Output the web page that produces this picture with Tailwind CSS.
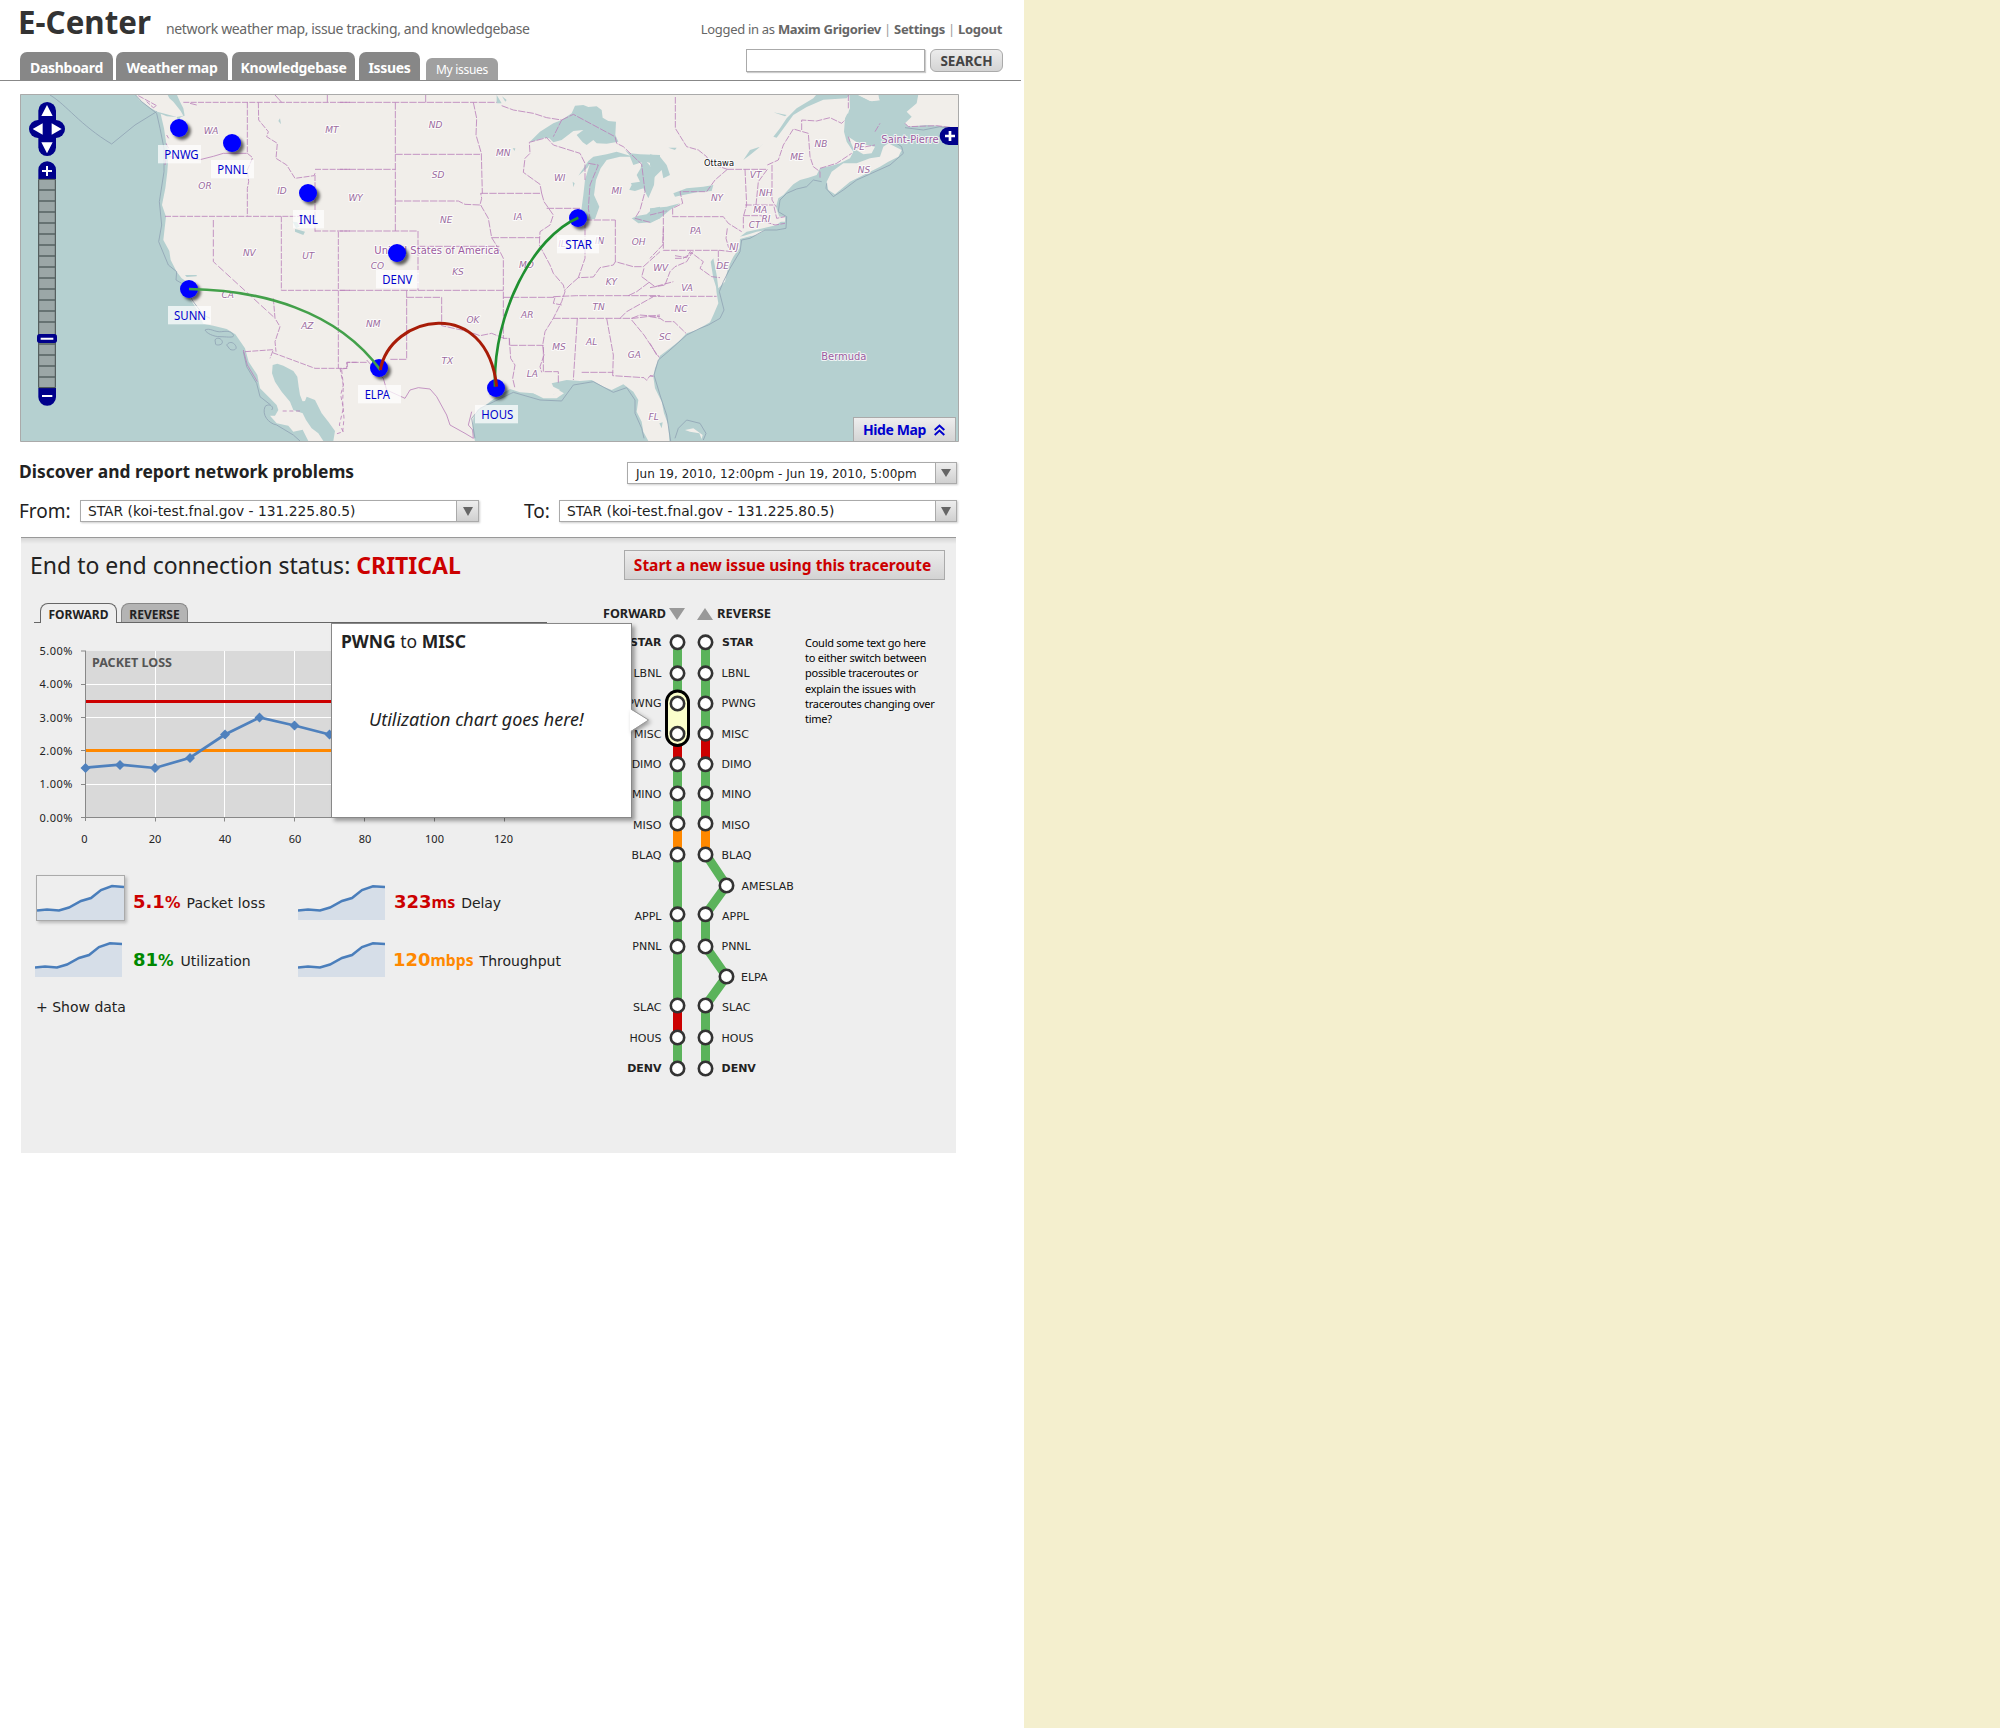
<!DOCTYPE html>
<html lang="en">
<head>
<meta charset="utf-8">
<title>E-Center</title>
<script src="https://cdn.jsdelivr.net/npm/@tailwindcss/browser@4"></script>
</head>
<body class="flex bg-[#f4efce] font-['Noto_Sans',sans-serif] text-[#222]">
<main class="h-[1728px] w-[1024px] shrink-0 bg-white">

  <header class="h-[81px] w-[1021px] border-b border-[#888]">
    <div class="flex h-[52px] items-baseline whitespace-nowrap pt-[2px] pl-[18px] pr-[19px] text-[#666]">
      <h1 class="w-[148px] text-[31.300px] leading-10 font-bold text-[#333]">E-Center</h1>
      <p class="text-[14px] tracking-[-0.35px]">network weather map, issue tracking, and knowledgebase</p>
      <p class="ml-auto text-[13px] tracking-[-0.3px]">Logged in as <b>Maxim Grigoriev</b> <span class="text-[#999]">|</span> <b>Settings</b> <span class="text-[#999]">|</span> <b>Logout</b></p>
    </div>
    <nav class="flex h-7 items-end pl-5 whitespace-nowrap text-[14px] font-bold tracking-[-0.3px] text-white">
      <a class="h-7 w-[93px] rounded-t-[7px] bg-[#878787] text-center leading-[31px]">Dashboard</a>
      <a class="ml-[3px] h-7 w-[112px] rounded-t-[7px] bg-[#878787] text-center leading-[31px]">Weather map</a>
      <a class="ml-1 h-7 w-[123px] rounded-t-[7px] bg-[#878787] text-center leading-[31px]">Knowledgebase</a>
      <a class="ml-1 h-7 w-[61px] rounded-t-[7px] bg-[#878787] text-center leading-[31px]">Issues</a>
      <a class="ml-1.5 h-[22px] w-[72px] rounded-t-[6px] bg-[#a0a0a0] text-center text-[12px] leading-[23px] font-normal">My issues</a>
      <form class="-mt-[3px] mr-[18px] ml-auto flex gap-[5px] self-start">
        <input class="h-[23px] w-[179px] border border-[#aaa] bg-white shadow-[1px_1px_1px_#ccc]">
        <button type="button" class="h-[23px] w-[73px] rounded-[6px] border border-[#aaa] bg-linear-to-b from-[#ececec] to-[#d4d4d4] text-[13.500px] leading-[22px] tracking-normal text-[#444]">SEARCH</button>
      </form>
    </nav>
  </header>

  <section class="relative mt-[13px] ml-5 h-[348px] w-[939px] overflow-hidden">
    <svg class="block h-[348px] w-[939px]" viewBox="60 282 2817 1044" fill="none" stroke-linejoin="round">
      <defs>
        <filter id="drop" x="-50%" y="-50%" width="220%" height="220%"><feDropShadow dx="9" dy="9" stdDeviation="5" flood-color="#000" flood-opacity=".6"/></filter>
      </defs>
      <rect x="60" y="282" width="2817" height="1044" fill="#f1eeea"/>

      <!-- West -->
      <g transform="translate(30 255)">
        <g fill="#b5d0d0">
          <path d="M30 28H375L388 45 420 68 442 80 470 88 500 96 520 92 512 78 490 50 478 40 472 28H500L510 50 520 70 524 92 512 96 506 112 500 96 470 94 452 86 455 100 462 130 468 170 476 205 472 260 466 310 456 360 468 395 464 430 460 465 478 498 482 525 500 560 515 580 530 590 540 640 560 672 580 716 610 722 650 732 676 748 705 790 716 830 742 870 750 910 780 940 800 960 805 975 795 992 780 992 800 1015 835 1022 850 1040 878 1034 895 1068H30Z"/>
          <path d="M788 840 802 836 820 842 850 858 862 875 866 905 870 930 878 950 868 950 885 948 890 935 915 945 935 985 955 1010 975 1038 970 1068H940L925 1045 905 1030 888 1005 878 985 850 975 840 950 815 920 795 890 786 865Z"/>
          <path d="M855 432 870 436 885 440 880 450 870 446 855 440ZM525 570 560 570 560 574 530 576ZM805 108 810 100 813 118ZM848 410 862 412 868 425 858 430Z"/>
        </g>
        <g stroke="#90a4b4" stroke-width="2.5">
          <path d="M120 30C170 60 210 120 305 177L375 120 440 80M375 28 395 50 440 85 450 130 462 190 462 260 448 350 455 420 446 470 475 540 500 560 498 585 515 595 550 650 580 690 600 700"/>
          <path d="M585 735c15-8 30 8 50 5s30 0 35 10-20 5-40 5-40-10-45-20M615 765c5-10 20-5 22 5s-15 12-20 8zM650 780c10-15 25-5 28 5s-10 12-18 8zM700 800l10 45 30 50 10 40 32 25M765 965c10-12 30 0 20 10M765 965c-10 25 10 50 35 55l50 30 20 18"/>
        </g>
        <g stroke="#bb82bb" stroke-width="2.5">
          <path d="M385 32 440 62 430 68 410 50M520 52H1020M712 52V205M712 205 728 218 712 255 716 290 712 310V394M745 52 746 105 775 140 770 155 802 175 798 220 830 240 855 280 912 272 915 265V440M915 253H1020M915 438H1020M985 440V850M814 394V616H1020M790 640 795 700 810 725 795 770 798 800M705 800 790 794 780 820M788 803 915 850H1010V832H1040M465 394H915" stroke-dasharray="18 4"/>
          <path d="M610 405V530L790 695" stroke-dasharray="22 7"/>
          <path d="M476 215 570 224 610 214 640 205H710M795 30 815 52M952 30V52M560 60l-20-5M470 150l6 10M468 175l8 15M465 240l5-30M700 795l12 45 30 50"/>
          <path d="M995 855 1000 900 992 930 1000 970 988 1020 1000 1040 975 1048M870 978H810" stroke-dasharray="12 8"/>
        </g>
      </g>

      <!-- Central -->
      <g transform="translate(1020 255)">
        <g fill="#b5d0d0">
          <path d="M568 172 600 140 640 115 665 105 695 85 705 62 730 60 745 66 770 64 785 75 788 98 805 108 828 110 826 150 835 170 800 176 770 175 760 165 740 180 728 172 710 150 730 135 700 138 665 165 640 172 628 160 612 158 590 166Z"/>
          <path d="M735 285 730 330 724 375 740 405 765 402 778 365 762 330 768 285 782 250 800 225 840 215 870 215 880 240 905 232 902 250 890 270 900 290 870 295 855 312 885 318 910 310 925 340 942 300 945 260 920 230 960 245V210L900 208 870 205 855 195 870 212 830 200 800 208 760 215 745 228 715 272 742 248 750 235Z"/>
          <path d="M875 400 895 392 920 388 940 370 960 365V400L930 412 895 415ZM470 30 485 55 470 55ZM486 34 500 45 496 50ZM518 190l8 0-2 8zM698 290l6 5-4 12z"/>
          <path d="M405 1068 398 1040 400 1000 412 975 440 958 470 935 510 912 540 922 580 925 615 935 640 930 660 915 640 905 635 895 680 885 720 888 755 885 790 905 815 915 850 898 880 920 895 945 890 980 905 1010 910 1040 925 1068Z"/>
        </g>
        <g fill="#f1eeea"><path d="M580 925 600 918 640 930 655 915 672 925 650 940 610 940Z"/><path d="M780 290 790 255 815 240 845 225 860 260 875 300 860 330 780 330Z"/></g>
        <g stroke="#90a4b4" stroke-width="2.5"><path d="M405 1060 395 1000 420 970 520 922 600 945 665 948 700 900 760 890 820 922 860 908 885 945 885 985 905 1030 912 1060"/></g>
        <g stroke="#bb82bb" stroke-width="2.5">
          <path d="M0 52H470M257 30V52M166 52V438M166 208H420M0 253H166M400 52 410 100 408 150 424 205 427 325M422 325H605M166 348H355L375 358 420 360 425 340 422 325M422 360 445 400 455 458 475 490 490 520 490 616M455 458H600M605 325 612 350 640 390 630 420 600 440 598 480 630 540 640 565 670 600 675 620 665 650 655 670 640 700 615 740 608 780M605 325 600 298 550 262 555 220 570 205 568 172 620 158 640 180 720 205 735 235 735 285M620 370H722M735 405H826M0 438H234V616M234 484H478M0 616H490V760H508V781H610V860H655V895M200 616V823H148M200 637H305V722L350 732 380 738 420 752 455 745 492 760M490 637H645L640 655 665 660M508 760 512 820 525 840 518 880 525 910M608 781 612 810 600 845 605 862M640 700H880L960 690M712 700 700 885M800 700 820 810 818 872 912 878 920 886 930 872 960 878M725 862H820M735 408V520L715 578 760 576 780 548 820 540 826 530 880 545 910 545M826 405V530M640 635 710 632 960 632M865 632 890 620 930 590M840 700 860 680 940 635M910 545 960 500M912 550 905 575 945 605 1000 590M715 578 690 600 675 615M485 62 520 75 580 85 620 98 665 105 640 155M665 105 700 88 825 155 830 175 850 185 905 238 915 320 900 375 885 400 930 412 960 390M745 235 775 240 750 300 745 370 750 400M0 852 22 850V832H80M875 700 900 690 960 695M875 705 912 750 945 800 960 820" stroke-dasharray="22 4"/>
          <path d="M80 825 130 880 140 915 195 940 210 915 235 908 270 912 290 935 320 990 330 1020 375 1045 400 1060 398 1035 385 1020 395 980"/>
          <path d="M0 850 10 900 8 950 12 1000 8 1040" stroke-dasharray="12 8"/>
        </g>
      </g>

      <!-- East -->
      <g transform="translate(1950 255)">
        <g fill="#b5d0d0">
          <path d="M927 28H685L688 45 660 48 620 28H598L600 70 585 100 582 140 590 170 600 185 610 200 600 220 570 235 545 242 510 250 500 270 475 278 450 285 430 298 400 330 385 340 378 365 388 395 405 400 380 420 330 432 290 440 270 455 320 448 270 462 268 490 250 515 235 545 225 590 205 610 200 570 190 520 182 530 190 580 198 605 200 625 205 655 190 690 180 712 140 735 110 745 85 770 60 790 30 812 15 850 10 875 15 910 35 950 42 985 55 1020 58 1068H927Z"/>
          <path d="M370 155 390 130 410 100 440 70 490 40 500 28H600L590 40 520 44 470 66 430 90 390 145 380 158ZM0 208 30 215 50 240 60 270 40 280 35 255 10 280 0 240ZM55 188H80L75 195ZM70 325 110 310 160 305 190 300 185 318 140 322 100 330 75 335ZM0 370 50 365 90 355 60 375 30 400 0 415ZM370 82 410 90 405 94ZM280 225 300 195 330 185 350 165 325 190 300 210ZM28 1015 38 1012 35 1030Z"/>
        </g>
        <g fill="#f1eeea">
          <path d="M927 28H805L800 55 770 80 785 95 765 115 775 125 830 120 927 128Z"/>
          <path d="M530 290 545 260 580 235 620 235 660 220 690 215 700 185 715 175 755 195 745 215 715 230 690 245 600 290 555 328 535 315ZM595 155 625 175 650 180 675 185 665 205 640 208 610 190ZM505 62 530 50 570 42 598 55 595 85 560 95 530 92ZM385 395h20v15h-20zM620 28h55l15 18-25 3z"/>
          <path d="M258 460 320 440 345 436 320 450ZM105 1035 130 1030 158 1050 155 1062 148 1045 120 1040Z"/>
        </g>
        <g stroke="#90a4b4" stroke-width="2.5"><path d="M530 295 528 310 550 335 580 315 620 285 720 240 760 205 755 185 740 175M515 290 490 285 470 305 440 312 410 325 390 345 385 380 410 395 408 430 380 435 345 435 300 460 275 465 270 500 240 550 220 590 208 620 222 675 210 700 175 720 150 730 110 750 60 795 25 825 12 870 30 930 50 990 62 1068M765 128 820 135 870 125 920 135M75 1060 85 1030 110 1005 150 1015 168 1045 160 1065"/></g>
        <g stroke="#bb82bb" stroke-width="2.5">
          <path d="M76 36V130L110 185 145 195 170 215 180 235 232 253M232 253 195 285 170 320H90L98 355 68 370V395H220L235 415 275 440M232 253H352M285 253 290 360 280 395V430M352 253 325 290 318 360M366 240V345L378 365M285 360H370M280 392H335L345 410M40 375V496H210M205 496 205 550H225M232 430 228 460 235 485 245 500 210 496M352 240 385 225 400 180 430 132 475 145 480 215 490 245 510 260 510 280M455 135V105L500 108 540 98 575 115 585 105M0 634H200M40 430 38 480 0 520M75 512 110 518 120 500 160 530 150 550 185 575 210 578M75 520 100 520 130 500M0 608 45 600 60 560 75 545 110 530 125 505M0 695 30 700 45 710 72 710 108 745M0 775 20 810M0 873H10M0 390 50 378M595 28V70M510 250 560 235 605 205M600 170 595 155M620 190 675 180M675 140 690 115M372 365 380 400 405 395M345 410 375 420 405 415M765 115 775 125 860 122 925 130" stroke-dasharray="20 4"/>
        </g>
      </g>

      <!-- Place names -->
      <g fill="#9c6ba0" stroke="#fff" stroke-width="6" stroke-opacity=".8" paint-order="stroke" text-anchor="middle" class="font-['DejaVu_Sans',sans-serif] text-[27px] italic">
        <text x="633" y="402">WA</text><text x="615" y="567">OR</text><text x="846" y="581">ID</text><text x="996" y="399">MT</text>
        <text x="748" y="769">NV</text><text x="925" y="776">UT</text><text x="683" y="894">CA</text><text x="922" y="988">AZ</text>
        <text x="1307" y="385">ND</text><text x="1314" y="535">SD</text><text x="1067" y="602">WY</text><text x="1339" y="669">NE</text>
        <text x="1132" y="806">CO</text><text x="1374" y="826">KS</text><text x="1120" y="980">NM</text><text x="1419" y="968">OK</text>
        <text x="1342" y="1092">TX</text><text x="1510" y="467">MN</text><text x="1679" y="543">WI</text><text x="1554" y="661">IA</text>
        <text x="1579" y="805">MO</text><text x="1582" y="953">AR</text><text x="1597" y="1130">LA</text><text x="1677" y="1049">MS</text>
        <text x="1775" y="1034">AL</text><text x="1903" y="1075">GA</text><text x="1796" y="929">TN</text><text x="1834" y="854">KY</text>
        <text x="1850" y="581">MI</text><text x="1916" y="736">OH</text><text x="1799" y="732">IN</text><text x="1686" y="742">IL</text>
        <text x="1982" y="814">WV</text><text x="1961" y="1260">FL</text><text x="2087" y="703">PA</text><text x="2151" y="602">NY</text>
        <text x="2267" y="534">VT</text><text x="2297" y="588">NH</text><text x="2281" y="639">MA</text><text x="2264" y="683">CT</text><text x="2298" y="666">RI</text>
        <text x="2202" y="750">NJ</text><text x="2168" y="806">DE</text><text x="2061" y="872">VA</text><text x="2043" y="937">NC</text><text x="1995" y="1019">SC</text>
        <text x="2391" y="481">ME</text><text x="2463" y="442">NB</text><text x="2578" y="450">PE</text><text x="2592" y="518">NS</text>
      </g>
      <g fill="#9c5ba0" stroke="#fff" stroke-width="6" stroke-opacity=".8" paint-order="stroke" class="font-['DejaVu_Sans',sans-serif] text-[30px]">
        <text x="1123" y="762" textLength="375">United States of America</text>
        <text x="2464" y="1080" textLength="135">Bermuda</text>
        <text x="2644" y="429" textLength="172">Saint-Pierre</text>
        <text x="2112" y="498" textLength="90" fill="#111" class="text-[25px]">Ottawa</text>
      </g>

      <!-- Sites and links -->
      <g fill="#00f" filter="url(#drop)">
        <circle cx="537" cy="384" r="27"/><circle cx="696" cy="429" r="27"/><circle cx="924" cy="579" r="27"/><circle cx="567" cy="867" r="27"/>
        <circle cx="1191" cy="759" r="27"/><circle cx="1137" cy="1104" r="27"/><circle cx="1488" cy="1164" r="27"/><circle cx="1734" cy="654" r="27"/>
      </g>
      <g stroke="#1f9030" stroke-width="8">
        <path d="M567 867C780 870 1010 930 1141 1110" stroke="#43a04a"/>
        <path d="M1485 1160C1478 940 1600 710 1735 653"/>
        <path d="M1141 1110C1170 945 1460 884 1490 1160" stroke="#a81c08" stroke-width="9"/>
      </g>
      <g fill="#fff" fill-opacity=".72">
        <rect x="474" y="435" width="129" height="55"/><rect x="633" y="480" width="129" height="55"/><rect x="879" y="630" width="93" height="55"/><rect x="504" y="918" width="129" height="55"/>
        <rect x="1128" y="810" width="129" height="55"/><rect x="1074" y="1155" width="129" height="55"/><rect x="1425" y="1215" width="129" height="55"/><rect x="1671" y="705" width="126" height="55"/>
      </g>
      <g fill="#0000cd" class="font-['Noto_Sans',sans-serif] text-[38px]">
        <text x="493" y="477" textLength="103" lengthAdjust="spacingAndGlyphs">PNWG</text><text x="652" y="522" textLength="90" lengthAdjust="spacingAndGlyphs">PNNL</text>
        <text x="897" y="672" textLength="56" lengthAdjust="spacingAndGlyphs">INL</text><text x="522" y="960" textLength="96" lengthAdjust="spacingAndGlyphs">SUNN</text>
        <text x="1147" y="852" textLength="90" lengthAdjust="spacingAndGlyphs">DENV</text><text x="1094" y="1197" textLength="76" lengthAdjust="spacingAndGlyphs">ELPA</text>
        <text x="1444" y="1257" textLength="96" lengthAdjust="spacingAndGlyphs">HOUS</text><text x="1696" y="747" textLength="80" lengthAdjust="spacingAndGlyphs">STAR</text>
      </g>

      <!-- Pan and zoom -->
      <g transform="translate(30 255)">
        <g fill="#00008b">
          <rect x="85" y="51" width="53" height="162" rx="26.500"/><rect x="57" y="105" width="108" height="54" rx="27"/>
          <path d="M85 282V255a26.500 26.500 0 0 1 53 0V282ZM85 909V936a26.500 26.500 0 0 0 53 0V909Z"/>
        </g>
        <path fill="#fff" d="M111 60 128 93H94ZM111 205 94 172H128ZM68 132 98 115V149ZM155 132 125 115V149Z"/>
        <rect x="86" y="283" width="50" height="625" fill="#9ba7a7" stroke="#444b4b" stroke-width="3"/>
        <path stroke="#566363" stroke-width="5" d="M87 315H135M87 348H135M87 381H135M87 414H135M87 447H135M87 480H135M87 513H135M87 546H135M87 579H135M87 612H135M87 645H135M87 678H135M87 711H135M87 777H135M87 810H135M87 843H135M87 876H135"/>
        <rect x="81" y="747" width="60" height="27" rx="8" fill="#00008b"/>
        <path stroke="#fff" stroke-width="6" d="M92 761H130M96 258H126M111 243V273M96 933H127"/>
      </g>
      <path fill="#00008b" d="M2877 381H2846a27 27 0 0 0 0 54H2877Z"/>
      <path stroke="#fff" stroke-width="8" d="M2835 408H2865M2850 393V423"/>
      <rect x="61.500" y="283.500" width="2814" height="1041" stroke="#aaa" stroke-width="3"/>
    </svg>
    <a class="absolute right-[3px] bottom-0 flex h-[25px] w-[103px] items-center border border-[#aaa] bg-linear-to-b from-[#eee] to-[#d4d4d4] pl-[9px] text-[14px] font-bold tracking-[-0.4px] whitespace-nowrap text-[#0000cd]">Hide Map
      <svg class="ml-[8px] h-3 w-[11px]" viewBox="0 0 11 12" fill="none" stroke="#0000cd" stroke-width="2"><path d="M.7 6 5.500 1.500 10.300 6M.7 11 5.500 6.500 10.300 11"/></svg>
    </a>
  </section>

  <div class="mt-5 ml-5 flex h-[22px] w-[937px] justify-between whitespace-nowrap">
    <h2 class="-ml-px text-[17.400px] leading-[18px] font-bold">Discover and report network problems</h2>
    <div class="flex h-[22px] w-[330px] border border-[#aaa] pl-2 shadow-[1px_1px_2px_#ccc]">
      <span class="grow font-['DejaVu_Sans',sans-serif] text-[12px] leading-[22px] tracking-[0.03px]">Jun 19, 2010, 12:00pm - Jun 19, 2010, 5:00pm</span>
      <span class="flex w-[21px] items-center justify-center border-l border-[#aaa] bg-linear-to-b from-[#eee] to-[#d0d0d0]"><svg class="h-2 w-2.5" viewBox="0 0 10 8"><path fill="#666" d="M0 0H10L5 8Z"/></svg></span>
    </div>
  </div>
  <div class="mt-4 ml-[19px] flex h-[22px] w-[938px] whitespace-nowrap">
    <label class="w-[61px] text-[19px] leading-[22px]">From:</label>
    <div class="flex h-[22px] w-[399px] border border-[#aaa] pl-[7px] shadow-[1px_1px_2px_#ccc]">
      <span class="grow font-['DejaVu_Sans',sans-serif] text-[13.800px] leading-[21px]">STAR (koi-test.fnal.gov - 131.225.80.5)</span>
      <span class="flex w-[22px] items-center justify-center border-l border-[#aaa] bg-linear-to-b from-[#eee] to-[#d0d0d0]"><svg class="h-[9px] w-2.5" viewBox="0 0 10 9"><path fill="#666" d="M0 0H10L5 9Z"/></svg></span>
    </div>
    <label class="ml-[45px] w-[35px] text-[19px] leading-[22px]">To:</label>
    <div class="flex h-[22px] w-[398px] border border-[#aaa] pl-[7px] shadow-[1px_1px_2px_#ccc]">
      <span class="grow font-['DejaVu_Sans',sans-serif] text-[13.800px] leading-[21px]">STAR (koi-test.fnal.gov - 131.225.80.5)</span>
      <span class="flex w-[21px] items-center justify-center border-l border-[#aaa] bg-linear-to-b from-[#eee] to-[#d0d0d0]"><svg class="h-[9px] w-2.5" viewBox="0 0 10 9"><path fill="#666" d="M0 0H10L5 9Z"/></svg></span>
    </div>
  </div>

  <section class="mt-[15px] ml-[21px] h-[616px] w-[935px] border-t border-[#999] bg-[linear-gradient(#d6d6d6,#eeeeee_6px)]">
    <div class="flex justify-between pt-3 pr-[11px] pl-[9px] whitespace-nowrap">
      <h2 class="text-[23px] leading-[30px]">End to end connection status: <b class="text-[#c00]">CRITICAL</b></h2>
      <button type="button" class="h-[30px] w-[321px] border border-[#aaa] bg-linear-to-b from-[#ececec] to-[#d3d3d3] pr-1 text-[15.500px] leading-[28px] font-bold text-[#c00]">Start a new issue using this traceroute</button>
    </div>

    <div class="mt-[23px] flex">
      <div class="relative w-[552px] pl-[13px]">
        <div class="flex h-5 w-[513px] items-start border-b border-[#666] pl-1.5 whitespace-nowrap text-[12px] font-bold">
          <a class="h-5 w-[77px] rounded-t-[8px] border border-b-0 border-[#666] bg-[#eee] text-center leading-[22px]">FORWARD</a>
          <a class="ml-1 h-[19px] w-[67px] rounded-t-[8px] border border-b-0 border-[#888] bg-[#b4b4b4] text-center leading-[22px]">REVERSE</a>
        </div>

        <svg class="block h-[240px] w-[513px]" viewBox="34 623 513 240" fill="none">
          <path fill="#d9d9d9" d="M86 651H547V817.500H86Z"/>
          <path stroke="#fff" d="M86 684.500H547M86 717.500H547M86 751H547M86 784.500H547M155.500 651V817M224.500 651V817M294.500 651V817M364.500 651V817"/>
          <path stroke="#888" d="M85.500 651V821M81 651H86M81 684.500H86M81 717.500H86M81 750.500H86M81 784.500H86M81 817.500H547M155.500 817V821.500M224.500 817V821.500M294.500 817V821.500M364.500 817V821.500M434.500 817V821.500M504.500 817V821.500"/>
          <path stroke="#c00" stroke-width="3" d="M86 701.500H547"/>
          <path stroke="#f80" stroke-width="3" d="M86 750.500H547"/>
          <path stroke="#4f81bd" stroke-width="2.700" d="M85.500 767.700 120 764.700 155 768 190 757.700 225 734.500 259.500 717.500 294.500 725.500 329.500 734.500 364 740"/>
          <path fill="#4f81bd" d="M85.500 763l5 5-5 5-5-5zM120 760l5 5-5 5-5-5zM155 763l5 5-5 5-5-5zM190 753l5 5-5 5-5-5zM225 729.500l5 5-5 5-5-5zM259.500 712.500l5 5-5 5-5-5zM294.500 720.500l5 5-5 5-5-5zM329.500 729.500l5 5-5 5-5-5z"/>
          <text x="92" y="667" textLength="80" fill="#555" class="text-[12px] font-bold" lengthAdjust="spacingAndGlyphs">PACKET LOSS</text>
          <g fill="#222" class="text-[11px]">
            <text x="39.500" y="655" textLength="33">5.00%</text><text x="39.500" y="688" textLength="33">4.00%</text><text x="39.500" y="721.500" textLength="33">3.00%</text>
            <text x="39.500" y="754.500" textLength="33">2.00%</text><text x="39.500" y="788" textLength="33">1.00%</text><text x="39.500" y="821.500" textLength="33">0.00%</text>
            <g text-anchor="middle"><text x="84.500" y="843">0</text><text x="155" y="843">20</text><text x="225" y="843">40</text><text x="295" y="843">60</text><text x="365" y="843">80</text><text x="434.500" y="843">100</text><text x="503.500" y="843">120</text></g>
          </g>
        </svg>

        <div class="mt-3 grid grid-cols-[263px_1fr] whitespace-nowrap font-['DejaVu_Sans',sans-serif] text-[14px]">
          <div class="flex h-[67px] items-start pl-[2px]">
            <svg class="h-[46px] w-[89px] border border-[#aaa] shadow-[2px_2px_3px_#bbb]" viewBox="0 -9 87 44"><path fill="#d6dee8" d="M0 25.500 10 24.500 22 25.500 32 22.500 44 16 54 13 64 5 75 1 87 2V35H0Z"/><path fill="none" stroke="#4a7ebb" stroke-width="2.500" d="M0 25.500 10 24.500 22 25.500 32 22.500 44 16 54 13 64 5 75 1 87 2"/></svg>
            <p class="flex items-baseline gap-[6px] pl-[8px] leading-[54px]"><b class="text-[#c00]"><span class="text-[18px]">5.1</span><span class="text-[15.500px]">%</span></b><span class="tracking-[0.15px]">Packet loss</span></p>
          </div>
          <div class="flex h-[67px] items-start pl-[1px]">
            <svg class="mt-[10px] h-[35px] w-[87px]" viewBox="0 0 87 35"><path fill="#d6dee8" d="M0 25.500 10 24.500 22 25.500 32 22.500 44 16 54 13 64 5 75 1 87 2V35H0Z"/><path fill="none" stroke="#4a7ebb" stroke-width="2.500" d="M0 25.500 10 24.500 22 25.500 32 22.500 44 16 54 13 64 5 75 1.300 87 2"/></svg>
            <p class="flex items-baseline gap-[6px] pl-[9px] leading-[54px]"><b class="text-[#c00]"><span class="text-[18px]">323</span><span class="font-['Noto_Sans'] text-[16px]">ms</span></b><span class="tracking-[-0.1px]">Delay</span></p>
          </div>
          <div class="flex h-[48px] items-start pl-[1px]">
            <svg class="h-[35px] w-[87px]" viewBox="0 0 87 35"><path fill="#d6dee8" d="M0 25.500 10 24.500 22 25.500 32 22.500 44 16 54 13 64 5 75 1 87 2V35H0Z"/><path fill="none" stroke="#4a7ebb" stroke-width="2.500" d="M0 25.500 10 24.500 22 25.500 32 22.500 44 16 54 13 64 5 75 1.300 87 2"/></svg>
            <p class="flex items-baseline gap-[7px] pl-[11px] leading-[35px]"><b class="text-[#080]"><span class="text-[18px]">81</span><span class="text-[15.500px]">%</span></b><span>Utilization</span></p>
          </div>
          <div class="flex h-[48px] items-start pl-[1px]">
            <svg class="h-[35px] w-[87px]" viewBox="0 0 87 35"><path fill="#d6dee8" d="M0 25.500 10 24.500 22 25.500 32 22.500 44 16 54 13 64 5 75 1 87 2V35H0Z"/><path fill="none" stroke="#4a7ebb" stroke-width="2.500" d="M0 25.500 10 24.500 22 25.500 32 22.500 44 16 54 13 64 5 75 1.300 87 2"/></svg>
            <p class="flex items-baseline gap-[6px] pl-[8px] leading-[35px]"><b class="text-[#f80]"><span class="text-[18px]">120</span><span class="font-['Noto_Sans'] text-[15.700px]">mbps</span></b><span>Throughput</span></p>
          </div>
        </div>
        <a class="block pl-[2px] font-['DejaVu_Sans',sans-serif] text-[14px] leading-[34px]">+ Show data</a>
      </div>

      <svg class="block h-[490px] w-[232px] shrink-0" viewBox="573 603 232 490" fill="none">
        <g fill="#222" class="text-[12px] font-bold"><text x="603" y="618" textLength="63" lengthAdjust="spacingAndGlyphs">FORWARD</text><text x="717" y="618" textLength="54" lengthAdjust="spacingAndGlyphs">REVERSE</text></g>
        <path fill="#999" d="M669 608H685L677 620ZM697 620H713L705 608Z"/>
        <g stroke="#5bb35b" stroke-width="9">
          <path d="M677.500 642V1068M705.500 642V854L726.500 885.500 705.500 914.500V946.500L726.500 976.500 705.500 1005.500V1068"/>
          <path stroke="#c00" d="M677.500 734V764M705.500 734V764M677.500 1005.500V1037.500"/>
          <path stroke="#f80" d="M677.500 823.500V854.500M705.500 823.500V854.500"/>
        </g>
        <rect x="666.500" y="691" width="22" height="54.500" rx="11" fill="#fbffcb" stroke="#000" stroke-width="3"/>
        <g fill="#fff" stroke="#333" stroke-width="2.600">
          <circle cx="677.500" cy="642.300" r="6.700"/><circle cx="677.500" cy="673.300" r="6.700"/><circle cx="677.500" cy="703.500" r="6.700"/><circle cx="677.500" cy="733.700" r="6.700"/><circle cx="677.500" cy="764.300" r="6.700"/><circle cx="677.500" cy="793.500" r="6.700"/><circle cx="677.500" cy="823.500" r="6.700"/><circle cx="677.500" cy="854.500" r="6.700"/><circle cx="677.500" cy="914.300" r="6.700"/><circle cx="677.500" cy="946.500" r="6.700"/><circle cx="677.500" cy="1005.500" r="6.700"/><circle cx="677.500" cy="1037.500" r="6.700"/><circle cx="677.500" cy="1068.500" r="6.700"/>
          <circle cx="705.500" cy="642.300" r="6.700"/><circle cx="705.500" cy="673.300" r="6.700"/><circle cx="705.500" cy="703.500" r="6.700"/><circle cx="705.500" cy="733.700" r="6.700"/><circle cx="705.500" cy="764.300" r="6.700"/><circle cx="705.500" cy="793.500" r="6.700"/><circle cx="705.500" cy="823.500" r="6.700"/><circle cx="705.500" cy="854.500" r="6.700"/><circle cx="726.500" cy="885.500" r="6.700"/><circle cx="705.500" cy="914.300" r="6.700"/><circle cx="705.500" cy="946.500" r="6.700"/><circle cx="726.500" cy="976.500" r="6.700"/><circle cx="705.500" cy="1005.500" r="6.700"/><circle cx="705.500" cy="1037.500" r="6.700"/><circle cx="705.500" cy="1068.500" r="6.700"/>
        </g>
        <g fill="#222" class="font-['DejaVu_Sans',sans-serif] text-[11px]">
          <g text-anchor="end"><text x="661.500" y="646" class="font-bold">STAR</text><text x="661.500" y="677">LBNL</text><text x="661.500" y="707">PWNG</text><text x="661.500" y="738">MISC</text><text x="661.500" y="768">DIMO</text><text x="661.500" y="798">MINO</text><text x="661.500" y="829">MISO</text><text x="661.500" y="859">BLAQ</text><text x="661.500" y="920">APPL</text><text x="661.500" y="950">PNNL</text><text x="661.500" y="1011">SLAC</text><text x="661.500" y="1042">HOUS</text><text x="661.500" y="1072" class="font-bold">DENV</text></g>
          <text x="722" y="646" class="font-bold">STAR</text><text x="721.500" y="677">LBNL</text><text x="721.500" y="707">PWNG</text><text x="721.500" y="738">MISC</text><text x="721.500" y="768">DIMO</text><text x="721.500" y="798">MINO</text><text x="721.500" y="829">MISO</text><text x="721.500" y="859">BLAQ</text><text x="741.500" y="890">AMESLAB</text><text x="722" y="920">APPL</text><text x="721.500" y="950">PNNL</text><text x="741" y="981">ELPA</text><text x="722" y="1011">SLAC</text><text x="721.500" y="1042">HOUS</text><text x="721.500" y="1072" class="font-bold">DENV</text>
        </g>
      </svg>

      <p class="pt-[32px] text-[11px] leading-[15.200px] tracking-[-0.25px] whitespace-nowrap text-black">Could some text go here<br>to either switch between<br>possible traceroutes or<br>explain the issues with<br>traceroutes changing over<br>time?</p>
    </div>
  </section>

  <aside class="absolute top-[623px] left-[331px] h-[195px] w-[301px] border border-[#888] bg-white pl-[9px] whitespace-nowrap shadow-[3px_3px_4px_rgba(0,0,0,0.35)]">
    <h3 class="pt-[5px] text-[17.500px] leading-[25px]"><b>PWNG</b> to <b>MISC</b></h3>
    <p class="mt-[51px] pl-[28px] text-[18px] leading-[29px] italic">Utilization chart goes here!</p>
    <svg class="absolute top-[82px] -right-[21px] h-[32px] w-[21px] overflow-visible drop-shadow-[2px_2px_2px_rgba(0,0,0,0.35)]" viewBox="0 0 21 32"><path fill="#fff" d="M-1 3 17.500 14 -1 25.500"/><path fill="none" stroke="#999" d="M0 3 17.500 14 0 25.500"/></svg>
  </aside>
</main>
</body>
</html>
